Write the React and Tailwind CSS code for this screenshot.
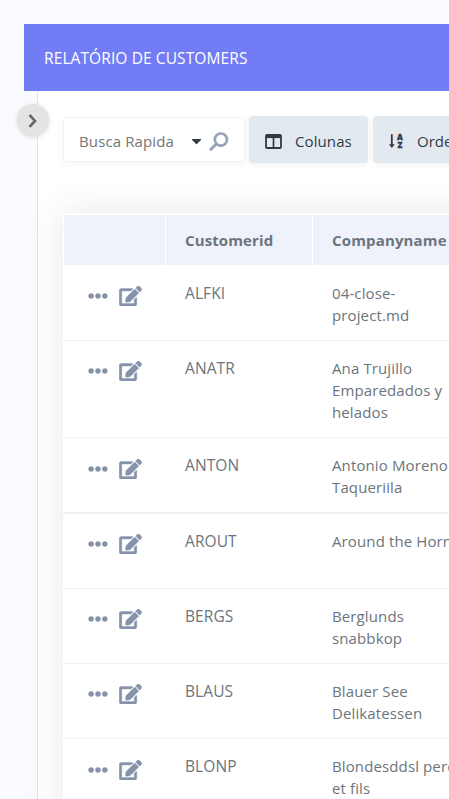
import { FaEllipsisH, FaEdit, FaCaretDown } from "react-icons/fa";

const rows = [
  { id: "ALFKI", lines: ["04-close-", "project.md"], h: "h-[76px]", pad: "pt-[17px]", icon: "pt-[19px]" },
  { id: "ANATR", lines: ["Ana Trujillo", "Emparedados y", "helados"], h: "h-[97px]", pad: "pt-[16px]", icon: "pt-[18px]" },
  { id: "ANTON", lines: ["Antonio Moreno", "Taqueriila"], h: "h-[76px]", pad: "pt-[16px]", icon: "pt-[19px]", thick: true },
  { id: "AROUT", lines: ["Around the Horn"], h: "h-[75px]", pad: "pt-[16px]", icon: "pt-[18px]" },
  { id: "BERGS", lines: ["Berglunds", "snabbkop"], h: "h-[75px]", pad: "pt-[16px]", icon: "pt-[18px]" },
  { id: "BLAUS", lines: ["Blauer See", "Delikatessen"], h: "h-[75px]", pad: "pt-[16px]", icon: "pt-[18px]" },
  { id: "BLONP", lines: ["Blondesddsl pere", "et fils"], h: "h-[75px]", pad: "pt-[16px]", icon: "pt-[19px]" },
];

function Row({ row }) {
  return (
    <div className={`flex shrink-0 bg-white ${row.h} ${row.thick ? "border-b-2" : "border-b"} border-[#eff2f7]`}>
      <div className={`flex w-[103px] shrink-0 items-start pl-[25px] text-[#8592a9] ${row.icon}`}>
        <FaEllipsisH className="mt-[2px] size-5" />
        <FaEdit className="mt-[2px] ml-[11px] h-[20px] w-[23px]" stroke="currentColor" strokeWidth="10" />
      </div>
      <div className={`w-[147px] shrink-0 pl-[19px] text-[15.5px] tracking-[0.1px] ${row.pad}`}>{row.id}</div>
      <div className={`w-[160px] shrink-0 pl-[19px] tracking-[0.12px] whitespace-nowrap ${row.pad}`}>
        {row.lines.map((line) => (
          <div key={line}>{line}</div>
        ))}
      </div>
    </div>
  );
}

export default function App() {
  return (
    <div className="h-[799px] w-full overflow-hidden bg-[#fafbff] pt-6 pl-6 font-['Open_Sans',sans-serif] text-[15px] leading-[22px] text-[#6c757d]">
      <header className="flex h-[67px] items-center bg-[#727cf5] pl-5 whitespace-nowrap text-white">
        <h1 className="text-[15.5px] tracking-[0.1px]">RELATÓRIO DE CUSTOMERS</h1>
      </header>
      <main className="relative ml-[13px] h-[708px] border-l border-[#dee2ee] bg-white pt-[25px] pl-[25px]">
        <button className="absolute top-[13px] -left-[21px] z-10 flex size-8 items-center justify-center rounded-full bg-[#e4e4e4] shadow-[0_1px_4px_rgba(0,0,0,0.15)]" aria-label="Abrir">
          <svg viewBox="0 0 16 16" className="size-4" fill="none" stroke="#686868" strokeWidth="2.6">
            <path d="M4.5 3 10 8.9 4.5 14.8" />
          </svg>
        </button>
        <div className="flex w-[520px] gap-[5px] text-[#323a46]">
          <div className="mt-px mr-[-1px] flex h-[45px] w-[182px] items-center rounded border border-[#eef2f7] bg-white pl-[15px] shadow-[0_2px_6px_rgba(50,58,70,0.05)]">
            <span className="w-[112px] pt-0.5 tracking-[0.12px] text-[#757575]">Busca Rapida</span>
            <FaCaretDown className="mt-[3px] h-4 w-[11px]" />
            <svg viewBox="0 0 20 20" className="mt-[5px] ml-[7px] size-5" fill="none" stroke="#98a3b5">
              <circle cx="11.9" cy="7.6" r="6.1" strokeWidth="2.7" />
              <path d="M7.3 12 1 18.2" strokeWidth="3" />
            </svg>
          </div>
          <button className="flex h-[47px] w-[119px] items-center rounded bg-[#e3eaef] pt-[3px] pl-4 shadow-[0_2px_6px_rgba(50,58,70,0.06)]">
            <svg viewBox="0 0 17 15" className="h-[15px] w-[17px]" fill="none" stroke="currentColor">
              <rect x="1" y="1" width="15" height="13" rx="1" strokeWidth="1.8" />
              <path d="M1 2.5H16" strokeWidth="3.2" />
              <path d="M8.5 3V14" strokeWidth="1.7" />
            </svg>
            <span className="ml-[13px] tracking-[0.1px]">Colunas</span>
          </button>
          <button className="flex h-[47px] w-[140px] items-center rounded bg-[#e3eaef] pt-[3px] pl-4 shadow-[0_2px_6px_rgba(50,58,70,0.06)]">
            <svg viewBox="0 0 15 15" className="h-[15px] w-[15px] overflow-visible font-['Open_Sans',sans-serif] font-extrabold" fill="currentColor">
              <path d="M1.9 .3h1.8v10h2.1L2.8 14 0 10.3h1.9z" />
              <text x="11" y="5.9" fontSize="8" textAnchor="middle" stroke="currentColor" strokeWidth="0.3">A</text>
              <text x="11" y="14" fontSize="8" textAnchor="middle" stroke="currentColor" strokeWidth="0.3">Z</text>
            </svg>
            <span className="ml-[13px]">Ordenar</span>
          </button>
        </div>
        <section className="mt-[50px] flex h-[680px] w-[600px] flex-col bg-white pt-[2px] shadow-[0_0_35px_rgba(50,60,60,0.12)]">
          <div className="flex h-[50px] shrink-0 gap-px pl-px font-bold">
            <div className="w-[101px] bg-[#eff2fb]" />
            <div className="w-[146px] bg-[#eff2fb] pt-[14px] pl-[19px] tracking-[0.12px]">Customerid</div>
            <div className="flex-1 bg-[#eff2fb] pt-[14px] pl-[19px] tracking-[0.15px]">Companyname</div>
          </div>
          {rows.map((row) => (
            <Row key={row.id} row={row} />
          ))}
        </section>
      </main>
    </div>
  );
}
